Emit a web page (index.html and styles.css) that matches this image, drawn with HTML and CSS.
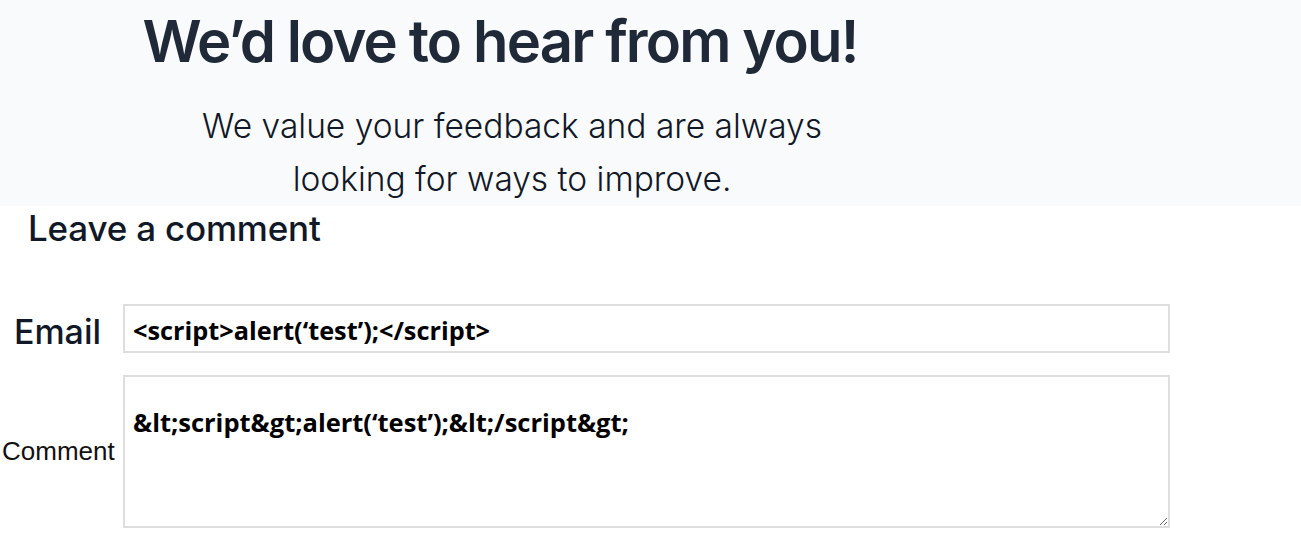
FILE: index.html
```html
<!DOCTYPE html>
<html lang="en">
<head>
<meta charset="utf-8">
<title>Feedback</title>
<link rel="stylesheet" href="styles.css">
</head>
<body>
<header class="hero">
  <div class="hero-inner">
    <h1 class="hero-title">We’d love to hear from you!</h1>
    <p class="hero-sub">We value your feedback and are always<br>looking for ways to improve.</p>
  </div>
</header>
<main class="comments">
  <h2 class="comments-title">Leave a comment</h2>
  <form class="comment-form">
    <div class="row">
      <label class="label label-email" for="email">Email</label>
      <input class="field field-input" id="email" type="text" value="<script>alert(‘test’);</script>">
    </div>
    <div class="row">
      <label class="label label-comment" for="comment">Comment</label>
      <textarea class="field field-area" id="comment">&amp;lt;script&amp;gt;alert(‘test’);&amp;lt;/script&amp;gt;</textarea>
    </div>
  </form>
</main>
</body>
</html>
```
FILE: styles.css
```css
* { box-sizing: border-box; }
html, body { margin: 0; padding: 0; background: #ffffff; }
body { font-family: Inter, "Noto Sans", sans-serif; color: #1f2937; }

.hero {
  background: #f9fafb;
  height: 206px;
}
.hero-inner {
  width: 1000px;
  text-align: center;
  padding-top: 7px;
}
.hero-title {
  margin: 0;
  font-size: 58px;
  font-weight: 600;
  line-height: 68px;
  letter-spacing: -1.85px;
  color: #1f2937;
}
.hero-sub {
  margin: 25px 0 0 24px;
  font-size: 33.5px;
  font-weight: 300;
  line-height: 53px;
  color: #111827;
}
.hero-sub-2 { margin-right: 16px; }

.comments { padding: 0; }
.comments-title {
  margin: 1px 0 0 28px;
  font-size: 35px;
  font-weight: 500;
  line-height: 42px;
  letter-spacing: -0.2px;
  color: #111827;
}
.comment-form {
  margin-top: 55px;
  display: flex;
  flex-direction: column;
  gap: 22px;
}
.row {
  display: flex;
  align-items: center;
  gap: 6px;
}
.label {
  width: 117px;
  text-align: center;
  color: #111;
}
.label-email {
  font-family: Inter, sans-serif;
  font-weight: 500;
  font-size: 34px;
  padding-top: 6px;
  padding-right: 2px;
  color: #111827;
}
.label-comment {
  font-family: "Liberation Sans", Arial, sans-serif;
  font-size: 26px;
  text-align: left;
  padding-left: 2px;
}
.field {
  width: 1047px;
  border: 2px solid #dedede;
  background: #ffffff;
  font-family: "Open Sans", sans-serif;
  font-weight: 700;
  color: #000;
  padding: 0 8px;
  outline: none;
}
.field-input {
  height: 49px;
  font-size: 25.3px;
  padding-top: 2px;
}
.field-area {
  height: 153px;
  font-size: 25.5px;
  padding-top: 30px;
  resize: both;
  line-height: 30px;
}
```
